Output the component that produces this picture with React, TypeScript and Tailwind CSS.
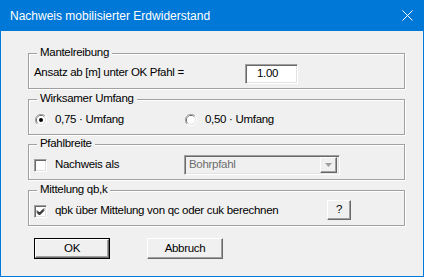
import React from "react";

const font = { fontFamily: '"Liberation Sans", Arial, sans-serif' };

function Group({ label, className = "", children }: { label: string; className?: string; children?: React.ReactNode }) {
  return (
    <div
      className={`relative w-[377px] h-[36px] border border-[#a0a0a0] shadow-[inset_1px_1px_0_#ffffff,1px_1px_0_#ffffff] ${className}`}
    >
      <span className="absolute left-[8px] top-[-8px] bg-[#f0f0f0] px-[3px] leading-[13px] text-black">
        {label}
      </span>
      {children}
    </div>
  );
}

function Radio({ checked }: { checked?: boolean }) {
  return (
    <svg width="12" height="12" viewBox="0 0 12 12" className="shrink-0">
      <path d="M10 2 A5.5 5.5 0 0 0 2 10" fill="none" stroke="#a0a0a0" strokeWidth="1" />
      <path d="M9.2 2.8 A4.5 4.5 0 0 0 2.8 9.2" fill="none" stroke="#696969" strokeWidth="1" />
      <circle cx="6" cy="6" r="4" fill="#ffffff" />
      <path d="M2 10 A5.5 5.5 0 0 0 10 2" fill="none" stroke="#ffffff" strokeWidth="1" />
      <path d="M2.8 9.2 A4.5 4.5 0 0 0 9.2 2.8" fill="none" stroke="#e3e3e3" strokeWidth="1" />
      {checked && <circle cx="6" cy="6" r="2" fill="#000000" />}
    </svg>
  );
}

function Check({ checked }: { checked?: boolean }) {
  return (
    <div className="w-[13px] h-[13px] shrink-0 bg-white border border-t-[#a0a0a0] border-l-[#a0a0a0] border-r-white border-b-white shadow-[inset_1px_1px_0_#696969,inset_-1px_-1px_0_#e3e3e3] flex items-center justify-center">
      {checked && (
        <svg width="9" height="9" viewBox="0 0 9 9">
          <path d="M1 3.5 L3.5 6 L8 1.5 M1 4.5 L3.5 7 L8 2.5 M1 5.5 L3.5 8 L8 3.5" fill="none" stroke="#000" strokeWidth="1" />
        </svg>
      )}
    </div>
  );
}

function Btn({ children, def, className = "" }: { children: React.ReactNode; def?: boolean; className?: string }) {
  const inner = (
    <div className="w-full h-full bg-[#f0f0f0] border border-t-white border-l-white border-r-[#696969] border-b-[#696969] shadow-[inset_-1px_-1px_0_#a0a0a0] flex items-center justify-center text-black">
      {children}
    </div>
  );
  if (def) {
    return <div className={`border border-black ${className}`}>{inner}</div>;
  }
  return <div className={className}>{inner}</div>;
}

export default function App() {
  return (
    <div className="w-[424px] h-[277px] bg-[#0078d7] flex flex-col px-[1px] pb-[1px]" style={font}>
      <div className="h-[31px] shrink-0 flex items-center justify-between pl-[9px] pr-[10px] text-white">
        <span className="text-[12px] leading-none mt-[1px]">
          Nachweis mobilisierter Erdwiderstand
        </span>
        <svg width="11" height="11" viewBox="0 0 11 11">
          <path d="M0.5 0.5 L10.5 10.5 M10.5 0.5 L0.5 10.5" stroke="#ffffff" strokeWidth="1" />
        </svg>
      </div>
      <div className="flex-1 bg-[#f0f0f0] pl-[27px] pt-[22px] text-[11.5px] tracking-[-0.3px] text-black">
        <Group label="Mantelreibung">
          <div className="flex items-center h-full pt-[6px] pl-[5px]">
            <span className="mt-[-2px]">Ansatz ab [m] unter OK Pfahl =</span>
            <div className="ml-auto mr-[106px] w-[53px] h-[20px] bg-white border border-t-[#a0a0a0] border-l-[#a0a0a0] border-r-white border-b-white shadow-[inset_1px_1px_0_#696969,inset_-1px_-1px_0_#e3e3e3] flex items-center pl-[11px]">
              1.00
            </div>
          </div>
        </Group>
        <Group label="Wirksamer Umfang" className="mt-[10px]">
          <div className="flex items-center h-full pt-[6px] pl-[6px]">
            <Radio checked />
            <span className="ml-[8px] w-[130px]">0,75 · Umfang</span>
            <Radio />
            <span className="ml-[8px]">0,50 · Umfang</span>
          </div>
        </Group>
        <Group label="Pfahlbreite" className="mt-[9px]">
          <div className="flex items-center h-full pt-[6px] pl-[5px]">
            <Check />
            <span className="ml-[8px] w-[129px]">Nachweis als</span>
            <div className="w-[156px] h-[20px] border border-t-[#a0a0a0] border-l-[#a0a0a0] border-r-white border-b-white shadow-[inset_1px_1px_0_#696969,inset_-1px_-1px_0_#e3e3e3] bg-[#f0f0f0] flex items-center pl-[4px] pr-[2px]">
              <span className="text-[#6d6d6d] flex-1">Bohrpfahl</span>
              <div className="w-[17px] h-[16px] border border-t-white border-l-white border-r-[#696969] border-b-[#696969] shadow-[inset_-1px_-1px_0_#a0a0a0] flex items-center justify-center">
                <svg width="7" height="4" viewBox="0 0 7 4">
                  <path d="M0 0 H7 L3.5 4 Z" fill="#a0a0a0" />
                </svg>
              </div>
            </div>
          </div>
        </Group>
        <Group label="Mittelung qb,k" className="mt-[10px]">
          <div className="flex items-center h-full pt-[6px] pl-[5px]">
            <Check checked />
            <span className="ml-[8px] w-[272px]">qbk über Mittelung von qc oder cuk berechnen</span>
            <Btn className="w-[24px] h-[20px] mt-[-3px]">?</Btn>
          </div>
        </Group>
        <div className="flex mt-[12px] pl-[6px] gap-[37px]">
          <Btn def className="w-[76px] h-[21px]">OK</Btn>
          <Btn className="w-[76px] h-[21px]">Abbruch</Btn>
        </div>
      </div>
    </div>
  );
}
